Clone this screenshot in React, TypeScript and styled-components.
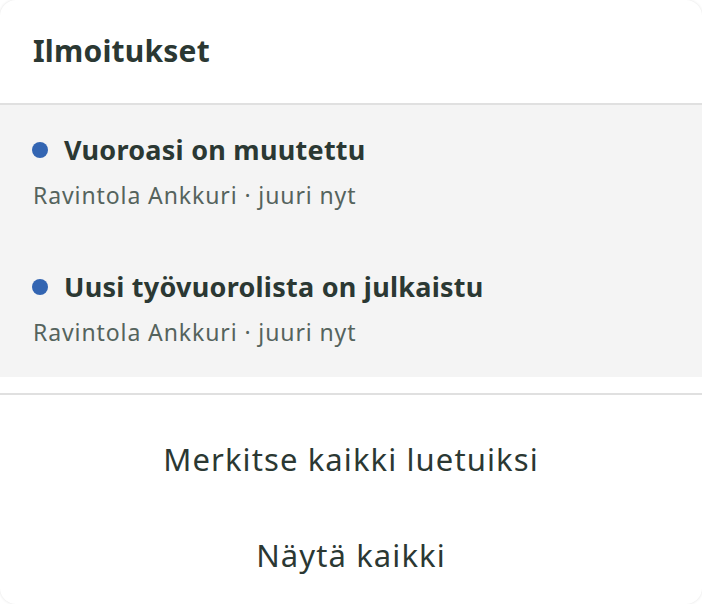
import React from 'react'
import styled, {createGlobalStyle} from 'styled-components'

const GlobalStyle = createGlobalStyle`
  html, body {
    margin: 0;
    padding: 0;
    background: #ffffff;
  }
  * {
    box-sizing: border-box;
  }
`

const textColor = '#2b3833'

const Panel = styled.div`
  width: 702px;
  height: 604px;
  background: #ffffff;
  border-radius: 16px;
  box-shadow: 0 0 3px rgba(0, 0, 0, 0.12);
  overflow: hidden;
  display: flex;
  flex-direction: column;
  font-family: 'Noto Sans', sans-serif;
  color: ${textColor};
`

const Header = styled.div`
  height: 105px;
  padding: 0 33px 2px;
  display: flex;
  align-items: center;
  border-bottom: 2px solid #e0e0e0;
`

const Title = styled.h1`
  margin: 0;
  font-size: 30px;
  font-weight: 700;
  line-height: 1;
  letter-spacing: 0.2px;
`

const List = styled.div`
  background: #f4f4f4;
  padding: 30px 33px;
  display: flex;
  flex-direction: column;
  gap: 62px;
`

const Item = styled.div`
  display: flex;
  flex-direction: column;
  gap: 15px;
`

const ItemTitle = styled.div`
  display: flex;
  align-items: center;
  gap: 16px;
  margin-left: -1px;
  font-size: 27px;
  font-weight: 700;
  line-height: 30px;
  letter-spacing: 0.25px;
`

const Dot = styled.span`
  width: 16px;
  height: 16px;
  border-radius: 50%;
  background: #3365b2;
  flex: none;
`

const Meta = styled.div`
  font-size: 23px;
  line-height: 30px;
  letter-spacing: 0.9px;
  color: #55635d;
`

const Footer = styled.div`
  margin-top: 16px;
  border-top: 2px solid #e0e0e0;
  flex: 1;
  display: flex;
  flex-direction: column;
  padding-top: 16px;
`

const ActionButton = styled.button`
  height: 96px;
  flex: none;
  border: none;
  padding: 0;
  background: transparent;
  font-family: inherit;
  font-size: 31px;
  font-weight: 400;
  letter-spacing: 1.1px;
  color: ${textColor};
  cursor: pointer;
`

const notifications = [
  {title: 'Vuoroasi on muutettu', place: 'Ravintola Ankkuri', time: 'juuri nyt'},
  {
    title: 'Uusi työvuorolista on julkaistu',
    place: 'Ravintola Ankkuri',
    time: 'juuri nyt',
  },
]

const App: React.FC = () => {
  return (
    <>
      <GlobalStyle />
      <Panel>
        <Header>
          <Title>Ilmoitukset</Title>
        </Header>
        <List>
          {notifications.map((n) => (
            <Item key={n.title}>
              <ItemTitle>
                <Dot />
                {n.title}
              </ItemTitle>
              <Meta>
                {n.place} · {n.time}
              </Meta>
            </Item>
          ))}
        </List>
        <Footer>
          <ActionButton>Merkitse kaikki luetuiksi</ActionButton>
          <ActionButton>Näytä kaikki</ActionButton>
        </Footer>
      </Panel>
    </>
  )
}

export default App
